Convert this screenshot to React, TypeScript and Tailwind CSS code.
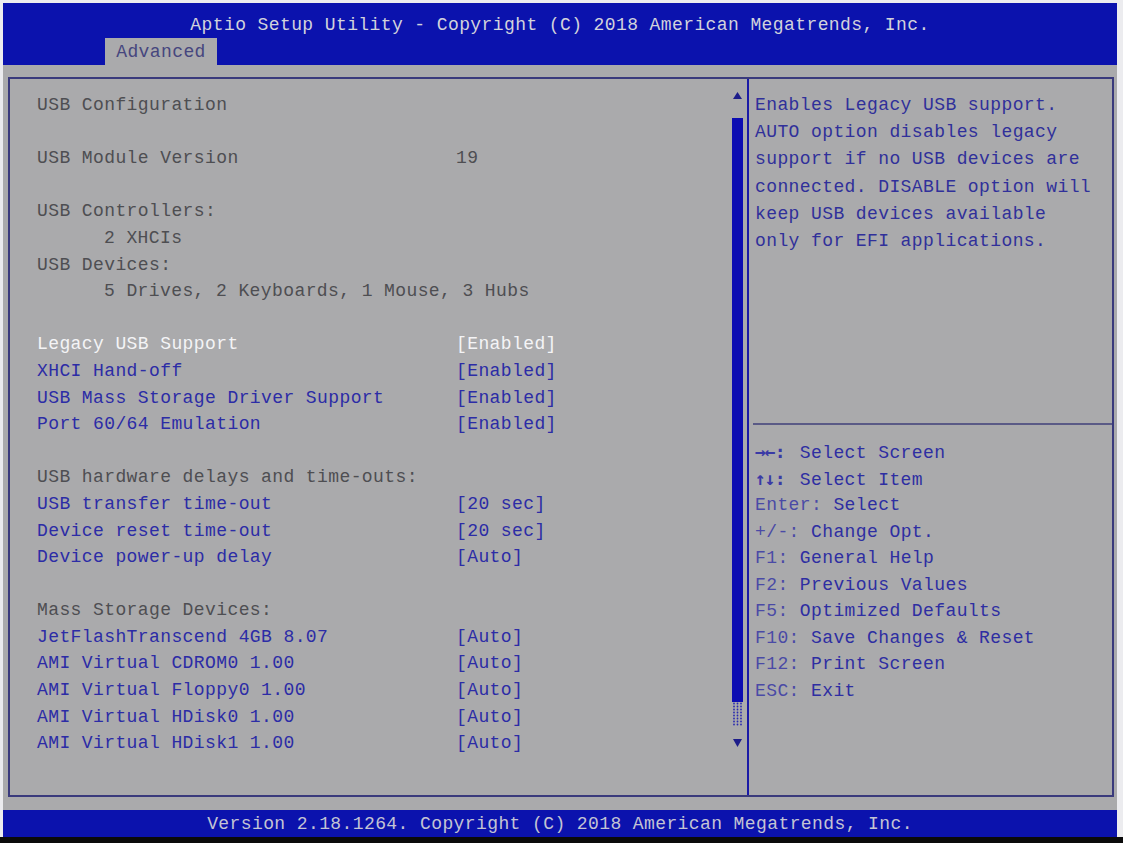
import React from "react";

type Row =
  | { kind: "blank" }
  | { kind: "label"; text: string; value?: string; indent?: boolean }
  | { kind: "item"; text: string; value: string; active?: boolean };

const rows: Row[] = [
  { kind: "label", text: "USB Configuration" },
  { kind: "blank" },
  { kind: "label", text: "USB Module Version", value: "19" },
  { kind: "blank" },
  { kind: "label", text: "USB Controllers:" },
  { kind: "label", text: "2 XHCIs", indent: true },
  { kind: "label", text: "USB Devices:" },
  { kind: "label", text: "5 Drives, 2 Keyboards, 1 Mouse, 3 Hubs", indent: true },
  { kind: "blank" },
  { kind: "item", text: "Legacy USB Support", value: "[Enabled]", active: true },
  { kind: "item", text: "XHCI Hand-off", value: "[Enabled]" },
  { kind: "item", text: "USB Mass Storage Driver Support", value: "[Enabled]" },
  { kind: "item", text: "Port 60/64 Emulation", value: "[Enabled]" },
  { kind: "blank" },
  { kind: "label", text: "USB hardware delays and time-outs:" },
  { kind: "item", text: "USB transfer time-out", value: "[20 sec]" },
  { kind: "item", text: "Device reset time-out", value: "[20 sec]" },
  { kind: "item", text: "Device power-up delay", value: "[Auto]" },
  { kind: "blank" },
  { kind: "label", text: "Mass Storage Devices:" },
  { kind: "item", text: "JetFlashTranscend 4GB 8.07", value: "[Auto]" },
  { kind: "item", text: "AMI Virtual CDROM0 1.00", value: "[Auto]" },
  { kind: "item", text: "AMI Virtual Floppy0 1.00", value: "[Auto]" },
  { kind: "item", text: "AMI Virtual HDisk0 1.00", value: "[Auto]" },
  { kind: "item", text: "AMI Virtual HDisk1 1.00", value: "[Auto]" },
];

const helpLines = [
  "Enables Legacy USB support.",
  "AUTO option disables legacy",
  "support if no USB devices are",
  "connected. DISABLE option will",
  "keep USB devices available",
  "only for EFI applications.",
];

// arrow keys are drawn with a heavier mono font, as in the firmware
const keys: [string, string, boolean?][] = [
  ["→←:", "Select Screen", true],
  ["↑↓:", "Select Item", true],
  ["Enter:", "Select"],
  ["+/-:", "Change Opt."],
  ["F1:", "General Help"],
  ["F2:", "Previous Values"],
  ["F5:", "Optimized Defaults"],
  ["F10:", "Save Changes & Reset"],
  ["F12:", "Print Screen"],
  ["ESC:", "Exit"],
];

function SettingRow({ row }: { row: Row }) {
  if (row.kind === "blank") return <div className="h-[26.6px]" />;
  const color =
    row.kind === "item" ? (row.active ? "text-[#f4f4f6]" : "text-[#2c2ca6]") : "text-[#4e4e52]";
  return (
    <div className={`flex h-[26.6px] leading-[26.6px] whitespace-pre ${color}`}>
      <div className={`w-[419px] shrink-0 ${row.kind === "label" && row.indent ? "pl-[67px]" : ""}`}>{row.text}</div>
      <div>{row.value}</div>
    </div>
  );
}

function Scrollbar() {
  return (
    <div className="w-[11px] shrink-0 flex flex-col items-center mr-[4px]">
      {/* up arrow */}
      <svg width="9" height="7" viewBox="0 0 9 7" className="mt-[13px]">
        <polygon points="4.5,0 9,7 0,7" fill="#1d1d8a" />
      </svg>
      <div className="mt-[19px] w-[11px] h-[584px] bg-[#0c0cb2]" />
      {/* dotted tail */}
      <svg width="11" height="25" viewBox="0 0 11 25">
        {Array.from({ length: 8 }).map((_, r) =>
          [2, 5.5, 9].map((cx) => <circle key={`${r}-${cx}`} cx={cx} cy={1.5 + r * 3} r="0.9" fill="#2a2ab0" />)
        )}
      </svg>
      <svg width="9" height="8" viewBox="0 0 9 8" className="mt-[12px]">
        <polygon points="0,0 9,0 4.5,8" fill="#1d1d8a" />
      </svg>
    </div>
  );
}

export default function App() {
  return (
    <div className="w-[1123px] h-[843px] bg-[#ececef] flex flex-col font-['Liberation_Mono',monospace] text-[18px] tracking-[0.4px] overflow-hidden">
      <div className="ml-[3px] mt-[3px] w-[1114px] flex-1 flex flex-col bg-[#aaaaac]">
        {/* header */}
        <div className="h-[62px] bg-[#0b12ad] flex flex-col">
          <div className="pt-[9px] h-[35px] leading-[26px] text-center text-[#d2d2dc] whitespace-pre">
            Aptio Setup Utility - Copyright (C) 2018 American Megatrends, Inc.
          </div>
          <div className="ml-[102px] w-[112px] h-[27px] bg-[#aaaaac] text-[#46467e] leading-[28px] text-center">
            Advanced
          </div>
        </div>

        {/* main panel */}
        <div className="mt-[12px] ml-[5px] mr-[3px] h-[720px] border-2 border-[#3a3a7c] flex">
          {/* left pane */}
          <div className="w-[737px] shrink-0 flex">
            <div className="flex-1 pl-[27px] pt-[13px]">
              {rows.map((row, i) => (
                <SettingRow key={i} row={row} />
              ))}
            </div>
            <Scrollbar />
          </div>
          <div className="w-[2px] bg-[#1a1aa6]" />
          {/* right pane */}
          <div className="flex-1 flex flex-col">
            <div className="h-[344px] pl-[6px] pt-[13px] text-[#30309a]">
              {helpLines.map((l) => (
                <div key={l} className="h-[27.2px] leading-[26.6px] whitespace-pre">
                  {l}
                </div>
              ))}
            </div>
            <div className="ml-[4px] h-[2px] bg-[#5a5a86]" />
            <div className="pl-[6px] pt-[14px] text-[#2e2ea2]">
              {keys.map(([k, d, arrow]) => (
                <div key={k} className="h-[26.5px] leading-[26.6px] whitespace-pre">
                  {arrow ? (
                    <span className="inline-block w-[33.6px] text-[#3a3aa6] font-['DejaVu_Sans_Mono',monospace] font-bold tracking-[-1px]">
                      {k}
                    </span>
                  ) : (
                    <span className="text-[#4a4aa6]">{k}</span>
                  )}{" "}
                  {d}
                </div>
              ))}
            </div>
          </div>
        </div>

        {/* footer */}
        <div className="mt-[13px] h-[27px] bg-[#0b12ad] text-[#c4c4d4] text-center leading-[28px] whitespace-pre">
          Version 2.18.1264. Copyright (C) 2018 American Megatrends, Inc.
        </div>
      </div>
      <div className="h-[6px] bg-[#0a0a0a]" />
    </div>
  );
}
